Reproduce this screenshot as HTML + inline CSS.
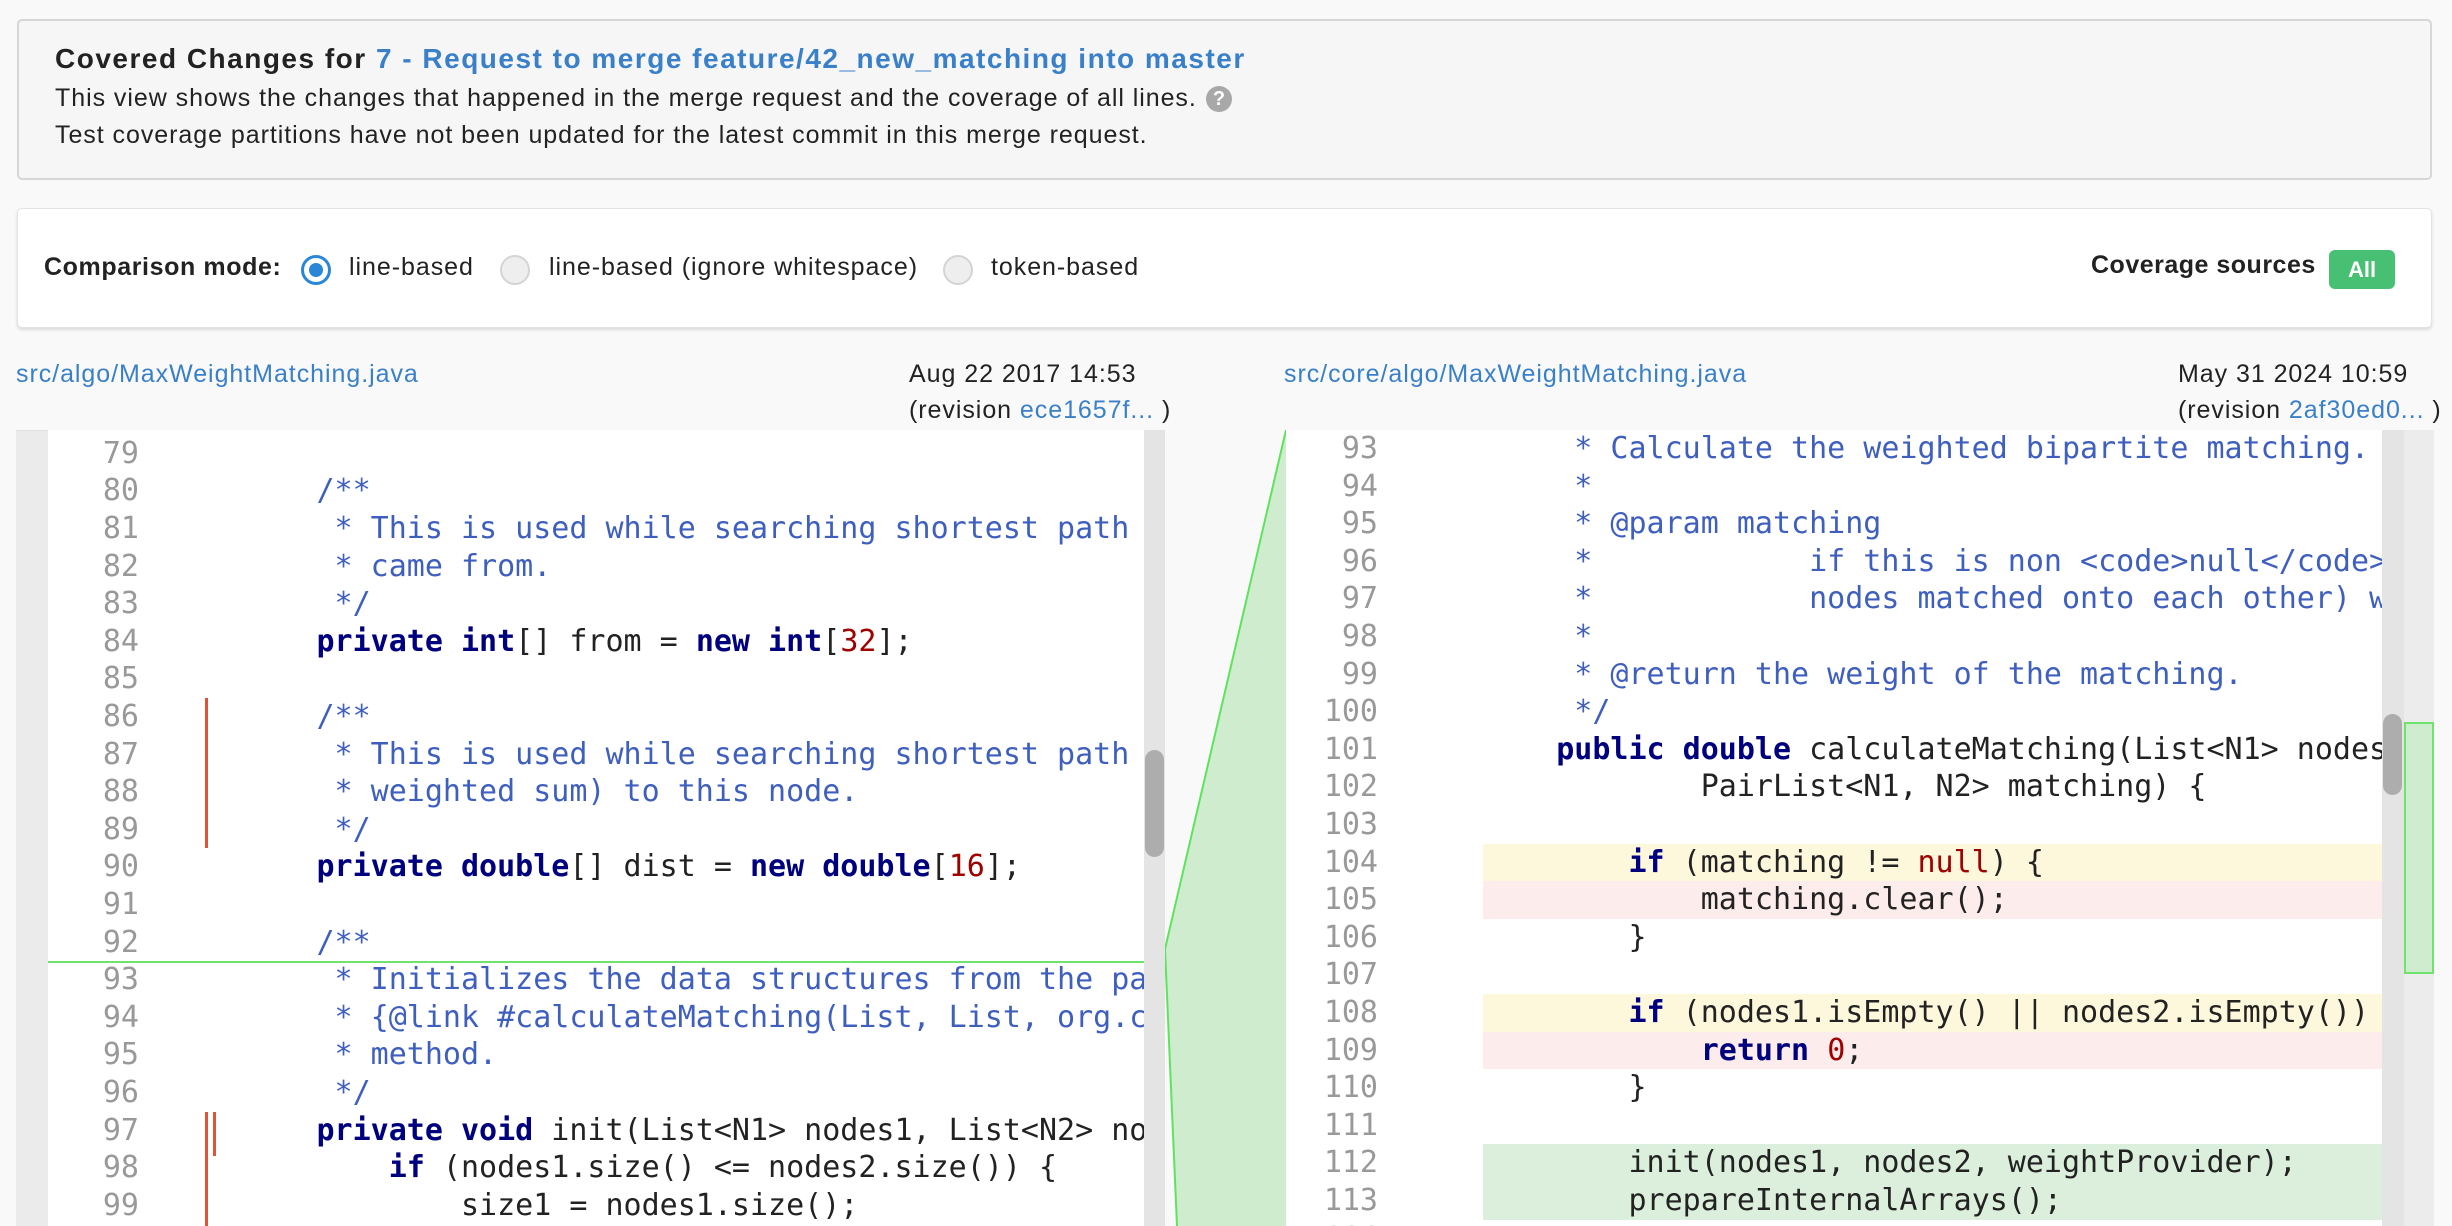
<!DOCTYPE html>
<html><head><meta charset="utf-8">
<style>
*{margin:0;padding:0;box-sizing:border-box}
body{width:2452px;height:1226px;background:#f9f9f9;position:relative;overflow:hidden;font-family:"Liberation Sans",sans-serif;color:#222}
.abs{position:absolute}
#box1{left:17px;top:19px;width:2415px;height:161px;background:#f6f6f6;border:2px solid #d6d6d6;border-radius:5px}
#box2{left:17px;top:208px;width:2415px;height:120px;background:#fff;border:1px solid #e2e2e2;border-radius:5px;box-shadow:0 2px 3px rgba(0,0,0,.12)}
.t{position:absolute;white-space:nowrap;font-size:25px;letter-spacing:0.95px}
a,.lnk{color:#3a80c8;text-decoration:none}
.radio{position:absolute;width:30px;height:30px;border-radius:50%;top:255px}
.code{position:absolute;overflow:hidden;background:#fff}
.ln{position:absolute;height:37.6px;line-height:37.6px;font-family:"DejaVu Sans Mono","Liberation Mono",monospace;font-size:30px;white-space:pre;letter-spacing:0}
.n{color:#999;text-align:right}
.c{color:#3f5fbf}
.k{color:#00007f;font-weight:bold}
.d{color:#a00000}
</style></head><body>

<div id="box1" class="abs"></div>
<div class="t" style="left:55px;top:43px;font-size:28px;font-weight:bold;color:#222;letter-spacing:1.5px">Covered Changes for <span class="lnk">7 - Request to merge feature/42_new_matching into master</span></div>
<div class="t" style="left:55px;top:84px">This view shows the changes that happened in the merge request and the coverage of all lines.</div>
<div class="abs" style="left:1206px;top:86px;width:26px;height:26px;border-radius:50%;background:#a8a8a8;color:#fff;font-weight:bold;font-size:20px;line-height:26px;text-align:center">?</div>
<div class="t" style="left:55px;top:121px">Test coverage partitions have not been updated for the latest commit in this merge request.</div>

<div id="box2" class="abs"></div>
<div class="t" style="left:44px;top:253px;font-weight:bold;letter-spacing:0.6px">Comparison mode:</div>
<div class="radio" style="left:301px;border:3px solid #2a86d6"><div style="position:absolute;left:5px;top:5px;width:14px;height:14px;border-radius:50%;background:#2a86d6"></div></div>
<div class="t" style="left:349px;top:253px">line-based</div>
<div class="radio" style="left:500px;background:#eee;border:2px solid #d4d4d4"></div>
<div class="t" style="left:549px;top:253px">line-based (ignore whitespace)</div>
<div class="radio" style="left:943px;background:#eee;border:2px solid #d4d4d4"></div>
<div class="t" style="left:991px;top:253px">token-based</div>
<div class="t" style="left:2091px;top:251px;font-weight:bold;letter-spacing:0.5px">Coverage sources</div>
<div class="abs" style="left:2329px;top:250px;width:66px;height:39px;background:#47c074;border-radius:6px;color:#fff;font-weight:bold;font-size:22px;line-height:39px;text-align:center">All</div>

<div class="t lnk" style="left:16px;top:360px">src/algo/MaxWeightMatching.java</div>
<div class="t" style="left:909px;top:360px">Aug 22 2017 14:53</div>
<div class="t" style="left:909px;top:396px">(revision <span class="lnk">ece1657f...</span> )</div>
<div class="t lnk" style="left:1284px;top:360px">src/core/algo/MaxWeightMatching.java</div>
<div class="t" style="left:2178px;top:360px">May 31 2024 10:59</div>
<div class="t" style="left:2178px;top:396px">(revision <span class="lnk">2af30ed0...</span> )</div>

<!-- connector -->
<svg class="abs" style="left:1160px;top:425px" width="130" height="801">
<polygon points="5,524 126,5 126,801 17,801" fill="#cfeccf"/>
<polyline points="17,801 5,524 126,5" fill="none" stroke="#5ee35e" stroke-width="2"/>
</svg>

<!-- left panel -->
<div class="abs" style="left:16px;top:430px;width:1149px;height:796px;background:#ebebeb;border-top:1px solid #e0e0e0"></div>
<div class="abs" style="left:1144px;top:430px;width:21px;height:796px;background:#e4e4e4"></div>
<div class="abs" style="left:1145px;top:750px;width:19px;height:107px;background:#adadad;border-radius:10px"></div>
<div class="code" style="left:48px;top:430px;width:1096px;height:796px">
<div class="abs" style="left:157px;top:268px;width:3px;height:150px;background:#e0533a"></div>
<div class="abs" style="left:157px;top:682px;width:3px;height:120px;background:#e0533a"></div>
<div class="abs" style="left:165px;top:682px;width:3px;height:44px;background:#e0533a"></div>
<div class="abs" style="left:0;top:531px;width:1096px;height:2px;background:#6ee36e"></div>
</div>

<!-- right panel -->
<div class="abs" style="left:2382px;top:430px;width:22px;height:796px;background:#e4e4e4"></div>
<div class="abs" style="left:2404px;top:430px;width:30px;height:796px;background:#ececec"></div>
<div class="abs" style="left:2383px;top:714px;width:19px;height:81px;background:#adadad;border-radius:10px"></div>
<div class="abs" style="left:2404px;top:722px;width:30px;height:252px;background:#cfeccf;border:2px solid #6ee36e"></div>
<div class="code" style="left:1286px;top:430px;width:1096px;height:796px">
<div class="abs" style="left:197px;top:413.6px;width:899px;height:37.6px;background:#fdf8dc"></div>
<div class="abs" style="left:197px;top:451.2px;width:899px;height:37.6px;background:#fdecec"></div>
<div class="abs" style="left:197px;top:564px;width:899px;height:37.6px;background:#fdf8dc"></div>
<div class="abs" style="left:197px;top:601.6px;width:899px;height:37.6px;background:#fdecec"></div>
<div class="abs" style="left:197px;top:714.4px;width:899px;height:75.2px;background:#dcefdc"></div>

<div class="ln n" style="left:0;width:92px;top:0">93</div><div class="ln c" style="left:198px;top:0">     * Calculate the weighted bipartite matching.</div>
<div class="ln n" style="left:0;width:92px;top:37.6px">94</div><div class="ln c" style="left:198px;top:37.6px">     *</div>
<div class="ln n" style="left:0;width:92px;top:75.2px">95</div><div class="ln c" style="left:198px;top:75.2px">     * @param matching</div>
<div class="ln n" style="left:0;width:92px;top:112.8px">96</div><div class="ln c" style="left:198px;top:112.8px">     *            if this is non &lt;code&gt;null&lt;/code&gt; the result</div>
<div class="ln n" style="left:0;width:92px;top:150.4px">97</div><div class="ln c" style="left:198px;top:150.4px">     *            nodes matched onto each other) will be stored</div>
<div class="ln n" style="left:0;width:92px;top:188px">98</div><div class="ln c" style="left:198px;top:188px">     *</div>
<div class="ln n" style="left:0;width:92px;top:225.6px">99</div><div class="ln c" style="left:198px;top:225.6px">     * @return the weight of the matching.</div>
<div class="ln n" style="left:0;width:92px;top:263.2px">100</div><div class="ln c" style="left:198px;top:263.2px">     */</div>
<div class="ln n" style="left:0;width:92px;top:300.8px">101</div><div class="ln" style="left:198px;top:300.8px">    <span class="k">public double</span> calculateMatching(List&lt;N1&gt; nodes1, List&lt;N2&gt; nodes2,</div>
<div class="ln n" style="left:0;width:92px;top:338.4px">102</div><div class="ln" style="left:198px;top:338.4px">            PairList&lt;N1, N2&gt; matching) {</div>
<div class="ln n" style="left:0;width:92px;top:376px">103</div>
<div class="ln n" style="left:0;width:92px;top:413.6px">104</div><div class="ln" style="left:198px;top:413.6px">        <span class="k">if</span> (matching != <span class="d">null</span>) {</div>
<div class="ln n" style="left:0;width:92px;top:451.2px">105</div><div class="ln" style="left:198px;top:451.2px">            matching.clear();</div>
<div class="ln n" style="left:0;width:92px;top:488.8px">106</div><div class="ln" style="left:198px;top:488.8px">        }</div>
<div class="ln n" style="left:0;width:92px;top:526.4px">107</div>
<div class="ln n" style="left:0;width:92px;top:564px">108</div><div class="ln" style="left:198px;top:564px">        <span class="k">if</span> (nodes1.isEmpty() || nodes2.isEmpty()) {</div>
<div class="ln n" style="left:0;width:92px;top:601.6px">109</div><div class="ln" style="left:198px;top:601.6px">            <span class="k">return</span> <span class="d">0</span>;</div>
<div class="ln n" style="left:0;width:92px;top:639.2px">110</div><div class="ln" style="left:198px;top:639.2px">        }</div>
<div class="ln n" style="left:0;width:92px;top:676.8px">111</div>
<div class="ln n" style="left:0;width:92px;top:714.4px">112</div><div class="ln" style="left:198px;top:714.4px">        init(nodes1, nodes2, weightProvider);</div>
<div class="ln n" style="left:0;width:92px;top:752px">113</div><div class="ln" style="left:198px;top:752px">        prepareInternalArrays();</div>
<div class="ln n" style="left:0;width:92px;top:789.6px">114</div>
</div>

<!-- left code lines -->
<div class="code" style="left:48px;top:430px;width:1096px;height:796px;background:transparent">
<div class="ln n" style="left:0;width:91px;top:4.8px">79</div>
<div class="ln n" style="left:0;width:91px;top:42.4px">80</div><div class="ln c" style="left:124px;top:42.4px">        /**</div>
<div class="ln n" style="left:0;width:91px;top:80px">81</div><div class="ln c" style="left:124px;top:80px">         * This is used while searching shortest path to remember</div>
<div class="ln n" style="left:0;width:91px;top:117.6px">82</div><div class="ln c" style="left:124px;top:117.6px">         * came from.</div>
<div class="ln n" style="left:0;width:91px;top:155.2px">83</div><div class="ln c" style="left:124px;top:155.2px">         */</div>
<div class="ln n" style="left:0;width:91px;top:192.8px">84</div><div class="ln" style="left:124px;top:192.8px">        <span class="k">private int</span>[] from = <span class="k">new int</span>[<span class="d">32</span>];</div>
<div class="ln n" style="left:0;width:91px;top:230.4px">85</div>
<div class="ln n" style="left:0;width:91px;top:268px">86</div><div class="ln c" style="left:124px;top:268px">        /**</div>
<div class="ln n" style="left:0;width:91px;top:305.6px">87</div><div class="ln c" style="left:124px;top:305.6px">         * This is used while searching shortest path to store the</div>
<div class="ln n" style="left:0;width:91px;top:343.2px">88</div><div class="ln c" style="left:124px;top:343.2px">         * weighted sum) to this node.</div>
<div class="ln n" style="left:0;width:91px;top:380.8px">89</div><div class="ln c" style="left:124px;top:380.8px">         */</div>
<div class="ln n" style="left:0;width:91px;top:418.4px">90</div><div class="ln" style="left:124px;top:418.4px">        <span class="k">private double</span>[] dist = <span class="k">new double</span>[<span class="d">16</span>];</div>
<div class="ln n" style="left:0;width:91px;top:456px">91</div>
<div class="ln n" style="left:0;width:91px;top:493.6px">92</div><div class="ln c" style="left:124px;top:493.6px">        /**</div>
<div class="ln n" style="left:0;width:91px;top:531.2px">93</div><div class="ln c" style="left:124px;top:531.2px">         * Initializes the data structures from the parameters</div>
<div class="ln n" style="left:0;width:91px;top:568.8px">94</div><div class="ln c" style="left:124px;top:568.8px">         * {@link #calculateMatching(List, List, org.conqat)}</div>
<div class="ln n" style="left:0;width:91px;top:606.4px">95</div><div class="ln c" style="left:124px;top:606.4px">         * method.</div>
<div class="ln n" style="left:0;width:91px;top:644px">96</div><div class="ln c" style="left:124px;top:644px">         */</div>
<div class="ln n" style="left:0;width:91px;top:681.6px">97</div><div class="ln" style="left:124px;top:681.6px">        <span class="k">private void</span> init(List&lt;N1&gt; nodes1, List&lt;N2&gt; nodes2,</div>
<div class="ln n" style="left:0;width:91px;top:719.2px">98</div><div class="ln" style="left:124px;top:719.2px">            <span class="k">if</span> (nodes1.size() &lt;= nodes2.size()) {</div>
<div class="ln n" style="left:0;width:91px;top:756.8px">99</div><div class="ln" style="left:124px;top:756.8px">                size1 = nodes1.size();</div>
<div class="ln n" style="left:0;width:91px;top:794.4px">100</div>
</div>
</body></html>
